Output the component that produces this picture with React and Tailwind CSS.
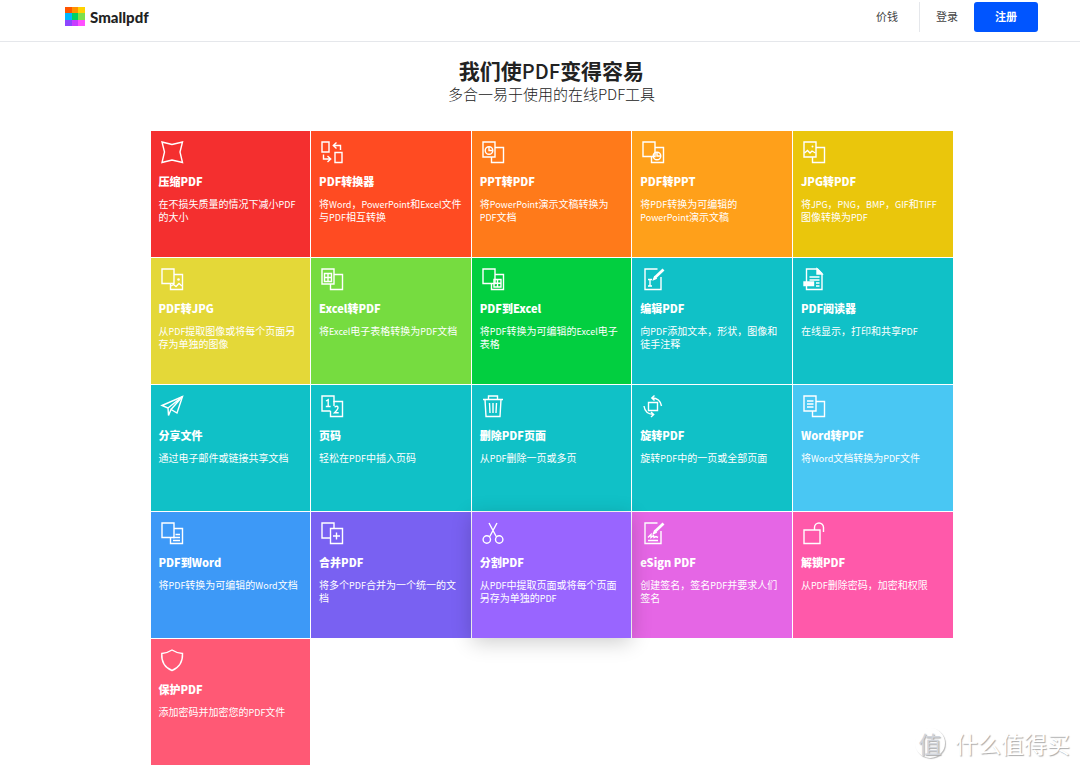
import React from 'react';

// Two overlapping pages, the front one is on the left or on the right
const PagesFront = ({ children }) => (
  <>
    <path d="M1 1h12v15H1z" />
    <path d="M13 6.500h8.500v15H9.500V16" />
    {children}
  </>
);

const PagesBack = ({ children }) => (
  <>
    <path d="M9.500 15.500H1V1h12v14.500H9.500" />
    <path d="M13 6.500h8.500v15H9.500v-6" />
    {children}
  </>
);

const icons = {
  compress: <path d="M1 1L11 3.500 21.500 1 19 11 21.500 21.500 11 19 1 21.500 3.500 11z" />,
  convert: (
    <>
      <path d="M1 1h7v10H1zM14 11.500h7v10h-7z" />
      <path d="M19.500 9V4.500H12.500M15.500 1.500l-3.200 3L15.500 7.500" />
      <path d="M2.500 13.500V18H9.500M6.500 15l3.200 3L6.500 21" />
    </>
  ),
  pptToPdf: (
    <PagesFront>
      <circle cx="7" cy="9.500" r="3.800" />
      <path d="M7 5.700v3.800h3.800" />
    </PagesFront>
  ),
  pdfToPpt: (
    <PagesBack>
      <circle cx="15" cy="15" r="3.800" />
      <path d="M15 11.200V15h3.800" />
    </PagesBack>
  ),
  jpgToPdf: (
    <PagesFront>
      <path d="M1.500 12l3-2.500 2.500 2.500 2-2 3.500 2" />
      <circle cx="9.500" cy="5.500" r="1" fill="currentColor" stroke="none" />
    </PagesFront>
  ),
  pdfToJpg: (
    <PagesBack>
      <path d="M10 18l2.500-1.500 2.500 2 3-3 3 2.500" />
      <circle cx="17.500" cy="11.500" r="1.300" fill="currentColor" stroke="none" />
    </PagesBack>
  ),
  excelToPdf: (
    <PagesFront>
      <path d="M3.500 5.500h7v8h-7zM7 5.500v8M3.500 9.500h7" />
    </PagesFront>
  ),
  pdfToExcel: (
    <PagesBack>
      <path d="M12 11.500h7v7.500h-7zM15.500 11.500V19M12 15.200h7" />
    </PagesBack>
  ),
  edit: (
    <>
      <path d="M15.500 1H3v20.500h16V9" />
      <path d="M13 9.500L21.500 1.500" strokeWidth="2.800" />
      <path d="M11.500 11.500l2.500-1-1.500-1.500z" fill="currentColor" />
      <path d="M6 11.500h4M8 11.500v6.500M6 18h4" />
    </>
  ),
  reader: (
    <>
      <path d="M3.500 14V1h11l4.500 4.500v16H3.500V18" />
      <path d="M14 1v5h5z" fill="currentColor" />
      <path d="M6.500 9h10M6.500 12h10M13 15h3.500M13 18h3.500" />
      <path d="M1 14h9.500v3.500H1z" fill="currentColor" />
    </>
  ),
  share: (
    <>
      <path d="M1 10.500L21.500 1.500 16 18l-6-3.500-2.500 6-.5-7.500z" />
      <path d="M7 13L21.500 1.500 10 14.500" />
    </>
  ),
  numbers: (
    <>
      <path d="M9.500 16H1V1h12v5.500h8.500v15H9.500V16" />
      <path d="M13 6v5" />
      <path d="M5 6l2.200-1.200V11.500M4.800 11.500h4.800" />
      <path d="M13.500 12q3.500-1.800 3.500.8 0 1.500-3.500 5h4.200" />
    </>
  ),
  trash: (
    <>
      <path d="M1 4.500h20M6.500 4.500V1h9v3.500M3 4.500l1 17h14l1-17" />
      <path d="M7.500 8l.5 10M11 8v10M14.500 8L14 18" />
    </>
  ),
  rotate: (
    <>
      <path d="M6.500 7.500h9V15.500h-9z" />
      <path d="M10 3q8 0 9.500 8M12.500.500L9.800 3l2.700 2.500" />
      <path d="M2 11q1 8 9.500 8.500M9 17l2.700 2.500L9 22" />
    </>
  ),
  wordToPdf: (
    <PagesFront>
      <path d="M4 6h6.500M4 9h6.500M4 12h6.500" />
    </PagesFront>
  ),
  pdfToWord: (
    <PagesBack>
      <path d="M14.500 12.500h4.500M12 15.500h7M12 18.500h7" />
    </PagesBack>
  ),
  merge: (
    <>
      <path d="M9.500 16H1V1h12v5.500" />
      <path d="M9.500 6.500h12v15h-12zM15.500 10.500v7M12 14h7" />
    </>
  ),
  split: (
    <>
      <path d="M7 1l7.500 14M15 1L7.500 15" />
      <circle cx="4.800" cy="17.500" r="3.700" />
      <circle cx="17.200" cy="17.500" r="3.700" />
    </>
  ),
  sign: (
    <>
      <path d="M15.500 1H3v20.500h16V9" />
      <path d="M13 9.500L21.500 1.500" strokeWidth="2.800" />
      <path d="M11.500 11.500l2.500-1-1.500-1.500z" fill="currentColor" />
      <path d="M6 15.500l3-3v3l2.500-2 .5 2 2-1 2 1M6 18.500h10" />
    </>
  ),
  unlock: <path d="M1 8h16v13.500H1zM11.500 8V5.500a4.500 4.500 0 0 1 9 0V10" />,
  protect: <path d="M11 1Q15.500 4 21.500 4.500Q22 17 11 21.500Q0 17 .8 4.500Q6.500 4 11 1z" />,
};

const tools = [
  { icon: 'compress', title: '压缩PDF', lines: ['在不损失质量的情况下减小PDF', '的大小'], color: 'bg-[#f42f2f]' },
  { icon: 'convert', title: 'PDF转换器', lines: ['将Word，PowerPoint和Excel文件', '与PDF相互转换'], color: 'bg-[#ff4b22]' },
  { icon: 'pptToPdf', title: 'PPT转PDF', lines: ['将PowerPoint演示文稿转换为', 'PDF文档'], color: 'bg-[#ff7a1a]' },
  { icon: 'pdfToPpt', title: 'PDF转PPT', lines: ['将PDF转换为可编辑的', 'PowerPoint演示文稿'], color: 'bg-[#ffa01a]' },
  { icon: 'jpgToPdf', title: 'JPG转PDF', lines: ['将JPG，PNG，BMP，GIF和TIFF', '图像转换为PDF'], color: 'bg-[#eac60c]' },
  { icon: 'pdfToJpg', title: 'PDF转JPG', lines: ['从PDF提取图像或将每个页面另', '存为单独的图像'], color: 'bg-[#e4d838]' },
  { icon: 'excelToPdf', title: 'Excel转PDF', lines: ['将Excel电子表格转换为PDF文档'], color: 'bg-[#76dc40]' },
  { icon: 'pdfToExcel', title: 'PDF到Excel', lines: ['将PDF转换为可编辑的Excel电子', '表格'], color: 'bg-[#02cf40]' },
  { icon: 'edit', title: '编辑PDF', lines: ['向PDF添加文本，形状，图像和', '徒手注释'], color: 'bg-[#10c1c7]' },
  { icon: 'reader', title: 'PDF阅读器', lines: ['在线显示，打印和共享PDF'], color: 'bg-[#10c1c7]' },
  { icon: 'share', title: '分享文件', lines: ['通过电子邮件或链接共享文档'], color: 'bg-[#10c1c7]' },
  { icon: 'numbers', title: '页码', lines: ['轻松在PDF中插入页码'], color: 'bg-[#10c1c7]' },
  { icon: 'trash', title: '删除PDF页面', lines: ['从PDF删除一页或多页'], color: 'bg-[#10c1c7]' },
  { icon: 'rotate', title: '旋转PDF', lines: ['旋转PDF中的一页或全部页面'], color: 'bg-[#10c1c7]' },
  { icon: 'wordToPdf', title: 'Word转PDF', lines: ['将Word文档转换为PDF文件'], color: 'bg-[#49c7f3]' },
  { icon: 'pdfToWord', title: 'PDF到Word', lines: ['将PDF转换为可编辑的Word文档'], color: 'bg-[#3d99f7]' },
  { icon: 'merge', title: '合并PDF', lines: ['将多个PDF合并为一个统一的文', '档'], color: 'bg-[#7961f2]' },
  { icon: 'split', title: '分割PDF', lines: ['从PDF中提取页面或将每个页面', '另存为单独的PDF'], color: 'bg-[#9965ff]', active: true },
  { icon: 'sign', title: 'eSign PDF', lines: ['创建签名，签名PDF并要求人们', '签名'], color: 'bg-[#e566e5]' },
  { icon: 'unlock', title: '解锁PDF', lines: ['从PDF删除密码，加密和权限'], color: 'bg-[#ff59aa]' },
  { icon: 'protect', title: '保护PDF', lines: ['添加密码并加密您的PDF文件'], color: 'bg-[#ff5975]' },
];

const logoColors = [
  'bg-[#ff5500]', 'bg-[#ff9100]', 'bg-[#ffd200]',
  'bg-[#00b8ff]', 'bg-[#00d264]', 'bg-[#7ee04b]',
  'bg-[#8c46ff]', 'bg-[#c83cff]', 'bg-[#ff50ff]',
];

// Latin words are set one size smaller than the Chinese text around them
const MixedText = ({ text }) =>
  text.split(/([A-Za-z]+)/).filter(Boolean).map((part, i) =>
    /^[A-Za-z]/.test(part) ? <span key={i} className="text-[9px] leading-none">{part}</span> : part
  );

const ToolTile = ({ tool }) => (
  <a
    href="#"
    className={`block min-h-[126px] pt-2.5 pl-2 pr-1.5 text-white ${tool.color} ${
      tool.active ? 'relative z-10 shadow-[0_4px_20px_rgba(0,0,0,0.2)]' : ''
    }`}
  >
    <svg
      viewBox="0 0 22 22"
      className="ml-0.5 w-[22px] h-[22px] overflow-visible"
      fill="none"
      stroke="currentColor"
      strokeWidth="1.400"
    >
      {icons[tool.icon]}
    </svg>
    <h2 className="mt-2.5 text-[11px] leading-4 font-black">{tool.title}</h2>
    <p className="mt-2 text-[10px] leading-[13px]">
      {tool.lines.map(line => (
        <span key={line} className="block">
          <MixedText text={line} />
        </span>
      ))}
    </p>
  </a>
);

const App = () => {
  return (
    <div className="relative min-h-screen bg-white text-[#222] font-['Noto_Sans_CJK_SC',sans-serif]">
      {/* Header */}
      <header className="border-b border-gray-200 pl-[23px]">
        <div className="max-w-[973px] mx-auto h-[41px] pb-2 flex items-center justify-between">
          <a href="#" className="flex items-center gap-[5px]">
            <span className="grid grid-cols-3 w-5 h-[19px]">
              {logoColors.map(color => (
                <span key={color} className={color} />
              ))}
            </span>
            <span className="text-[15px] leading-5 font-black font-['Lato',sans-serif]">Smallpdf</span>
          </a>
          <nav className="flex items-center text-[11px] text-[#444]">
            <a href="#" className="pr-[21px]">价钱</a>
            <span className="w-px h-[30px] bg-gray-200" />
            <a href="#" className="px-4">登录</a>
            <button className="w-16 h-[30px] rounded-[3px] bg-[#0055ff] text-white font-bold">注册</button>
          </nav>
        </div>
      </header>

      {/* Tools */}
      <main className="pl-[23px]">
        <div className="pt-3.5 text-center">
          <h1 className="text-[21px] leading-7 font-bold">
            我们使<span className="text-xl leading-none font-medium">PDF</span>变得容易
          </h1>
          <p className="text-[15px] leading-5 font-light">多合一易于使用的在线PDF工具</p>
        </div>
        <div className="max-w-[802px] mx-auto mt-[27px] grid grid-cols-5 gap-px">
          {tools.map(tool => (
            <ToolTile key={tool.icon} tool={tool} />
          ))}
        </div>
      </main>

      {/* Watermark */}
      <div className="absolute right-2.5 bottom-2 flex items-center gap-2.5 text-white [text-shadow:1px_1px_1px_#aaa]">
        <span className="w-[30px] h-[30px] rounded-full shadow-[1px_1px_1px_#bbb] flex items-center justify-center text-[23px] leading-none text-gray-300">
          值
        </span>
        <span className="text-[23px] leading-9">什么值得买</span>
      </div>
    </div>
  );
};

export default App;
